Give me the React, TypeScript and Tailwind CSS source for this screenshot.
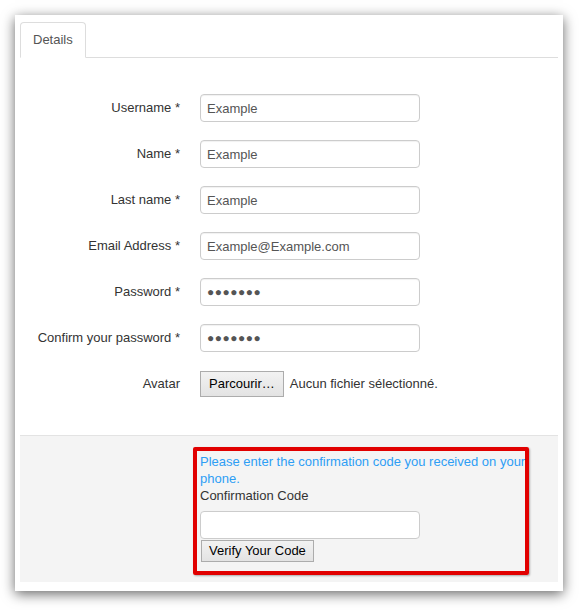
import React from "react";

const font = { fontFamily: '"Liberation Sans", Arial, sans-serif' };

function Row({ label, children }: { label: string; children: React.ReactNode }) {
  return (
    <div className="flex items-center h-[28px] mb-[18px]">
      <div className="w-[160px] text-right text-[13px] text-[#333] pr-0">{label}</div>
      <div className="ml-[20px] flex items-center">{children}</div>
    </div>
  );
}

function TextInput({ value }: { value: string }) {
  return (
    <input
      readOnly
      value={value}
      className="w-[220px] h-[28px] border border-[#ccc] rounded-[4px] bg-white px-[6px] text-[13px] text-[#555] shadow-[inset_0_1px_1px_rgba(0,0,0,0.06)] outline-none"
      style={font}
    />
  );
}

function PwInput() {
  return (
    <input
      readOnly
      value={"●●●●●●●"}
      className="w-[220px] h-[28px] border border-[#ccc] rounded-[4px] bg-white px-[6px] text-[12px] tracking-[0.5px] text-[#555] shadow-[inset_0_1px_1px_rgba(0,0,0,0.06)] outline-none"
      style={font}
    />
  );
}

export default function App() {
  return (
    <div className="w-[579px] h-[610px] bg-white pt-[15px] pl-[15px]" style={font}>
      <div className="w-[548px] bg-white shadow-[0_3px_12px_rgba(0,0,0,0.6)] pt-[7px] px-[5px] pb-[9px]">
        <div className="flex border-b border-[#ddd] h-[36px]">
          <div className="h-[36px] px-[12px] border border-[#ddd] border-b-white rounded-t-[4px] bg-white flex items-center text-[13px] text-[#555] -mb-px">
            Details
          </div>
        </div>
        <div className="pt-[36px] pb-[19px]">
          <Row label="Username *"><TextInput value="Example" /></Row>
          <Row label="Name *"><TextInput value="Example" /></Row>
          <Row label="Last name *"><TextInput value="Example" /></Row>
          <Row label="Email Address *"><TextInput value="Example@Example.com" /></Row>
          <Row label="Password *"><PwInput /></Row>
          <Row label="Confirm your password *"><PwInput /></Row>
          <Row label="Avatar">
            <div className="flex items-center">
              <button
                className="h-[26px] px-[8px] border border-[#acacac] bg-gradient-to-b from-[#f2f2f2] to-[#e3e3e3] text-[13px] text-black"
                style={font}
              >
                Parcourir…
              </button>
              <span className="ml-[6px] text-[13px] text-[#333]">Aucun fichier sélectionné.</span>
            </div>
          </Row>
        </div>
        <div className="bg-[#f4f4f4] border-t border-[#e3e3e3] pt-[11px] pb-[7px] pl-[173px]">
          <div className="w-[336px] border-[4px] border-[#e10000] rounded-[2px] shadow-[1px_1px_2px_rgba(0,0,0,0.3)] pt-[2px] pb-[9px] pl-[3px]">
            <div className="text-[13px] leading-[17px] text-[#2e9ef4] whitespace-nowrap">
              Please enter the confirmation code you received on your
              <br />
              phone.
            </div>
            <div className="text-[13px] leading-[18px] text-[#333]">Confirmation Code</div>
            <input
              readOnly
              className="mt-[6px] block w-[220px] h-[28px] border border-[#ccc] rounded-[4px] bg-white outline-none"
            />
            <button
              className="mt-[1px] ml-[1px] block h-[22px] px-[7px] border border-[#acacac] bg-gradient-to-b from-[#f2f2f2] to-[#e3e3e3] text-[13px] text-black"
              style={font}
            >
              Verify Your Code
            </button>
          </div>
        </div>
      </div>
    </div>
  );
}
